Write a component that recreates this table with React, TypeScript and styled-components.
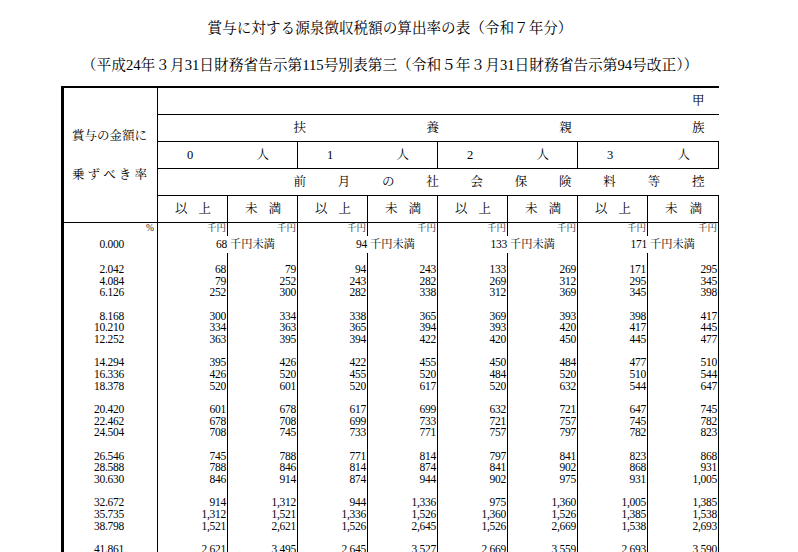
import React from "react";
import styled, { createGlobalStyle } from "styled-components";

const LINE = 11.66;

const GlobalStyle = createGlobalStyle`
  html, body {
    margin: 0;
    padding: 0;
    background: #fff;
  }
  body {
    font-family: "Liberation Serif", "Noto Serif CJK JP", "Noto Sans CJK JP", serif;
    color: #000;
  }
`;

const Page = styled.div`
  width: 798px;
  overflow: hidden;
`;

const Heading = styled.div`
  width: 780px;
  text-align: center;
  padding-top: 18px;
`;

const Title = styled.h1`
  margin: 0;
  font-size: 14.6px;
  font-weight: normal;
  line-height: 20px;
`;

const Subtitle = styled.h2`
  margin: 17px 0 0;
  font-size: 14.7px;
  font-weight: normal;
  line-height: 20px;
`;

const Table = styled.table`
  margin: 10.5px 0 0 61px;
  width: 658px;
  table-layout: fixed;
  border-collapse: separate;
  border-spacing: 0;
`;

const HeadCell = styled.td<{ $h: number; $open?: boolean; $top?: boolean }>`
  height: ${(p) => p.$h}px;
  padding: 0;
  border-bottom: 1px solid #000;
  border-right: ${(p) => (p.$open ? "none" : "1px solid #000")};
  border-top: ${(p) => (p.$top ? "2px solid #000" : "none")};
  font-size: 12.5px;
  line-height: 16px;
  vertical-align: middle;
`;

const CornerCell = styled.td`
  padding: 0;
  border-top: 2px solid #000;
  border-left: 3px solid #000;
  border-right: 1px solid #000;
  border-bottom: 1px solid #000;
  font-size: 12.5px;
  line-height: 16px;
  vertical-align: middle;
`;

const LabelStack = styled.div`
  display: flex;
  flex-direction: column;
  gap: 23px;
  padding: 1px 10px 0 8px;
`;

const SpreadRow = styled.div<{ $pl: number; $pr: number }>`
  display: flex;
  justify-content: space-between;
  padding: 0 ${(p) => p.$pr}px 0 ${(p) => p.$pl}px;
`;

const EndText = styled.div`
  text-align: right;
  padding-right: 14.5px;
`;

const UnitRow = styled.tr`
  height: 13px;
`;

const UnitCell = styled.td<{ $first?: boolean }>`
  padding: 0 ${(p) => (p.$first ? "3px" : "1px")} 0 0;
  border-left: ${(p) => (p.$first ? "3px solid #000" : "none")};
  border-right: 1px solid #000;
  text-align: right;
  vertical-align: top;
  font-size: 9.5px;
  line-height: 11px;
  color: #222;
`;

const MergedRow = styled.tr`
  height: 17px;
`;

const RateCell = styled.td`
  padding: 0 33px 0 0;
  border-left: 3px solid #000;
  border-right: 1px solid #000;
  text-align: right;
  font-size: 11.5px;
  letter-spacing: -0.25px;
  white-space: nowrap;
`;

const MergedCell = styled.td`
  padding: 0;
  border-right: 1px solid #000;
  font-size: 11.5px;
  white-space: nowrap;
`;

const MergedInner = styled.div`
  display: grid;
  grid-template-columns: 70px 1fr;
  line-height: 17px;
`;

const Lower = styled.span`
  text-align: right;
  padding-right: 1px;
  letter-spacing: -0.25px;
`;

const Below = styled.span`
  padding-left: 2px;
  font-size: 11.2px;
`;

const DataRow = styled.tr`
  height: ${LINE}px;
`;

const AmountCell = styled.td`
  padding: 0 1px 0 0;
  border-right: 1px solid #000;
  text-align: right;
  font-size: 11.5px;
  letter-spacing: -0.25px;
  line-height: ${LINE}px;
  white-space: nowrap;
`;

const GapRow = styled.tr`
  height: ${LINE}px;
`;

function Spread({ text, pl, pr }: { text: string; pl: number; pr: number }) {
  return (
    <SpreadRow $pl={pl} $pr={pr}>
      {[...text].map((c, i) => (
        <span key={i}>{c}</span>
      ))}
    </SpreadRow>
  );
}

const groups: { rate: string; values: string[] }[][] = [
  [
    { rate: "2.042", values: ["68", "79", "94", "243", "133", "269", "171", "295"] },
    { rate: "4.084", values: ["79", "252", "243", "282", "269", "312", "295", "345"] },
    { rate: "6.126", values: ["252", "300", "282", "338", "312", "369", "345", "398"] },
  ],
  [
    { rate: "8.168", values: ["300", "334", "338", "365", "369", "393", "398", "417"] },
    { rate: "10.210", values: ["334", "363", "365", "394", "393", "420", "417", "445"] },
    { rate: "12.252", values: ["363", "395", "394", "422", "420", "450", "445", "477"] },
  ],
  [
    { rate: "14.294", values: ["395", "426", "422", "455", "450", "484", "477", "510"] },
    { rate: "16.336", values: ["426", "520", "455", "520", "484", "520", "510", "544"] },
    { rate: "18.378", values: ["520", "601", "520", "617", "520", "632", "544", "647"] },
  ],
  [
    { rate: "20.420", values: ["601", "678", "617", "699", "632", "721", "647", "745"] },
    { rate: "22.462", values: ["678", "708", "699", "733", "721", "757", "745", "782"] },
    { rate: "24.504", values: ["708", "745", "733", "771", "757", "797", "782", "823"] },
  ],
  [
    { rate: "26.546", values: ["745", "788", "771", "814", "797", "841", "823", "868"] },
    { rate: "28.588", values: ["788", "846", "814", "874", "841", "902", "868", "931"] },
    { rate: "30.630", values: ["846", "914", "874", "944", "902", "975", "931", "1,005"] },
  ],
  [
    { rate: "32.672", values: ["914", "1,312", "944", "1,336", "975", "1,360", "1,005", "1,385"] },
    { rate: "35.735", values: ["1,312", "1,521", "1,336", "1,526", "1,360", "1,526", "1,385", "1,538"] },
    { rate: "38.798", values: ["1,521", "2,621", "1,526", "2,645", "1,526", "2,669", "1,538", "2,693"] },
  ],
  [
    { rate: "41.861", values: ["2,621", "3,495", "2,645", "3,527", "2,669", "3,559", "2,693", "3,590"] },
  ],
];

const firstBounds = ["68", "94", "133", "171"];
const dependents = ["0", "1", "2", "3"];
const colWidths = [97, 70, 70, 70, 70, 70, 70, 70, 71];

function Gap() {
  return (
    <GapRow>
      <RateCell />
      {Array.from({ length: 8 }).map((_, i) => (
        <AmountCell key={i} />
      ))}
    </GapRow>
  );
}

export default function App() {
  return (
    <Page>
      <GlobalStyle />
      <Heading>
        <Title>賞与に対する源泉徴収税額の算出率の表（令和７年分）</Title>
        <Subtitle>（平成24年３月31日財務省告示第115号別表第三（令和５年３月31日財務省告示第94号改正））</Subtitle>
      </Heading>
      <Table>
        <colgroup>
          {colWidths.map((w, i) => (
            <col key={i} style={{ width: w }} />
          ))}
        </colgroup>
        <tbody>
          <tr>
            <CornerCell rowSpan={5}>
              <LabelStack>
                <Spread text="賞与の金額に" pl={0} pr={0} />
                <Spread text="乗ずべき率" pl={0} pr={0} />
              </LabelStack>
            </CornerCell>
            <HeadCell colSpan={8} $h={26} $open $top>
              <EndText>甲</EndText>
            </HeadCell>
          </tr>
          <tr>
            <HeadCell colSpan={8} $h={26.5} $open>
              <Spread text="扶養親族" pl={135.5} pr={14.5} />
            </HeadCell>
          </tr>
          <tr>
            {dependents.map((d) => (
              <HeadCell key={d} colSpan={2} $h={25.5}>
                <Spread text={`${d}人`} pl={29} pr={28} />
              </HeadCell>
            ))}
          </tr>
          <tr>
            <HeadCell colSpan={8} $h={26.5} $open>
              <Spread text="前月の社会保険料等控" pl={135.5} pr={14.5} />
            </HeadCell>
          </tr>
          <tr>
            {dependents.map((d) => (
              <React.Fragment key={d}>
                <HeadCell $h={25.5}>
                  <Spread text="以上" pl={17} pr={16} />
                </HeadCell>
                <HeadCell $h={25.5}>
                  <Spread text="未満" pl={17} pr={16} />
                </HeadCell>
              </React.Fragment>
            ))}
          </tr>
          <UnitRow>
            <UnitCell $first>%</UnitCell>
            {Array.from({ length: 8 }).map((_, i) => (
              <UnitCell key={i}>千円</UnitCell>
            ))}
          </UnitRow>
          <MergedRow>
            <RateCell>0.000</RateCell>
            {firstBounds.map((b) => (
              <MergedCell key={b} colSpan={2}>
                <MergedInner>
                  <Lower>{b}</Lower>
                  <Below>千円未満</Below>
                </MergedInner>
              </MergedCell>
            ))}
          </MergedRow>
          {groups.map((group, gi) => (
            <React.Fragment key={gi}>
              <Gap />
              {group.map((row) => (
                <DataRow key={row.rate}>
                  <RateCell style={{ lineHeight: `${LINE}px` }}>{row.rate}</RateCell>
                  {row.values.map((v, i) => (
                    <AmountCell key={i}>{v}</AmountCell>
                  ))}
                </DataRow>
              ))}
            </React.Fragment>
          ))}
        </tbody>
      </Table>
    </Page>
  );
}
